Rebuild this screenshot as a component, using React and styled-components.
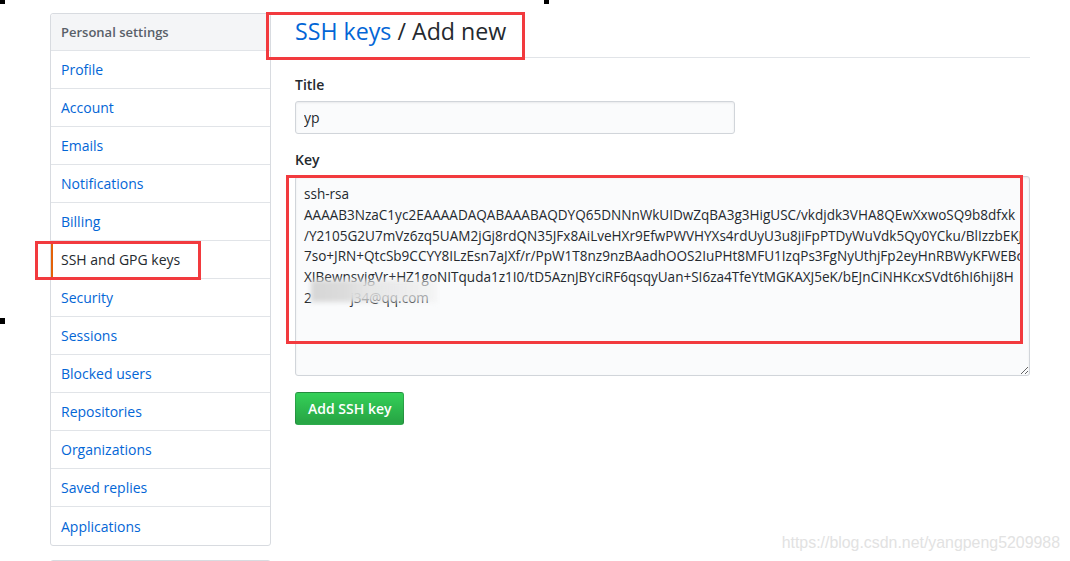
import React from "react";
import styled, { createGlobalStyle } from "styled-components";

const Global = createGlobalStyle`
  html, body { margin: 0; padding: 0; background: #fff; overflow: hidden; }
  body { font-family: "Open Sans", "Noto Sans", Arial, sans-serif; color: #24292e; }
  * { box-sizing: border-box; }
`;

const Page = styled.div`
  position: relative;
  width: 1070px;
  height: 561px;
  overflow: hidden;
  display: flex;
  align-items: flex-start;
  padding: 13px 0 0 50px;
  gap: 24px;
`;

const SideColumn = styled.div`
  display: flex;
  flex-direction: column;
  gap: 14px;
  width: 221px;
  flex: none;
`;

const Menu = styled.nav`
  border: 1px solid #d8dbe0;
  border-radius: 3px;
  background: #fff;
  display: flex;
  flex-direction: column;
  min-height: ${(p) => p.$minH || "0"};
`;

const MenuHeader = styled.div`
  height: 37px;
  display: flex;
  align-items: center;
  padding: 0 10px;
  background: #f4f5f7;
  border-bottom: 1px solid #e1e4e8;
  font-size: 13px;
  font-weight: 600;
  color: #586069;
  border-radius: 3px 3px 0 0;
`;

const MenuItem = styled.a`
  height: 38px;
  display: flex;
  align-items: center;
  padding: 0 10px 0 ${(p) => (p.$active ? "8px" : "10px")};
  border-bottom: ${(p) => (p.$last ? "none" : "1px solid #e1e4e8")};
  border-left: ${(p) => (p.$active ? "2px solid #e36209" : "none")};
  font-size: 14px;
  color: ${(p) => (p.$active ? "#24292e" : "#0366d6")};
  text-decoration: none;
`;

const Main = styled.main`
  width: 735px;
  flex: none;
  display: flex;
  flex-direction: column;
`;

const Subhead = styled.div`
  padding-bottom: 8px;
  border-bottom: 1px solid #e1e4e8;
  margin-bottom: 16px;
`;

const Heading = styled.h2`
  margin: 0;
  font-size: 23.2px;
  line-height: 36px;
  font-weight: 400;
  color: #24292e;
`;

const HeadLink = styled.a`
  color: #0366d6;
  text-decoration: none;
`;

const Label = styled.label`
  display: block;
  font-size: 14px;
  line-height: 21px;
  font-weight: 600;
  margin-bottom: 6px;
  color: #24292e;
`;

const Group = styled.div`
  margin-bottom: ${(p) => p.$mb || "15px"};
`;

const Input = styled.input`
  display: block;
  width: 440px;
  height: 33px;
  padding: 6px 8px;
  font-family: inherit;
  font-size: 14px;
  color: #24292e;
  background: #fafbfc;
  border: 1px solid #d1d5da;
  border-radius: 3px;
  box-shadow: inset 0 1px 2px rgba(27, 31, 35, 0.075);
  outline: none;
`;

const AreaWrap = styled.div`
  position: relative;
  width: 735px;
`;

const TextArea = styled.textarea`
  display: block;
  width: 735px;
  height: 200px;
  padding: 7px 8px;
  font-family: inherit;
  font-size: 13.55px;
  line-height: 20.8px;
  color: #24292e;
  background: #fafbfc;
  border: 1px solid #d1d5da;
  border-radius: 3px;
  box-shadow: inset 0 1px 2px rgba(27, 31, 35, 0.075);
  white-space: pre;
  overflow: hidden;
  resize: vertical;
  outline: none;
`;

const Smudge = styled.div`
  position: absolute;
  left: 16px;
  top: 104px;
  width: 126px;
  height: 22px;
  background: linear-gradient(
    90deg,
    rgba(214, 214, 214, 1) 0%,
    rgba(220, 220, 220, 1) 28%,
    rgba(226, 226, 226, 0.85) 45%,
    rgba(232, 232, 232, 0.75) 75%,
    rgba(240, 240, 240, 0.6) 100%
  );
  filter: blur(2.5px);
`;

const Button = styled.button`
  align-self: flex-start;
  margin-top: 16px;
  height: 33px;
  padding: 0 12px;
  font-family: inherit;
  font-size: 14px;
  font-weight: 600;
  color: #fff;
  background: linear-gradient(-180deg, #34d058 0%, #28a745 90%);
  border: 1px solid rgba(27, 31, 35, 0.2);
  border-radius: 3px;
  cursor: pointer;
`;

const Mark = styled.div`
  position: absolute;
  left: ${(p) => p.$x}px;
  top: ${(p) => p.$y}px;
  width: ${(p) => p.$w}px;
  height: ${(p) => p.$h}px;
  border: 3px solid #f23a3e;
  pointer-events: none;
`;

const Dot = styled.div`
  position: absolute;
  left: ${(p) => p.$x}px;
  top: ${(p) => p.$y}px;
  width: ${(p) => p.$w}px;
  height: ${(p) => p.$h}px;
  background: #000;
`;

const Watermark = styled.div`
  position: absolute;
  right: 10px;
  bottom: 9px;
  font-family: "Liberation Sans", Arial, sans-serif;
  font-size: 15.9px;
  color: #e2e2e2;
`;

const items = [
  "Profile",
  "Account",
  "Emails",
  "Notifications",
  "Billing",
  "SSH and GPG keys",
  "Security",
  "Sessions",
  "Blocked users",
  "Repositories",
  "Organizations",
  "Saved replies",
  "Applications",
];

const keyText = [
  "ssh-rsa",
  "AAAAB3NzaC1yc2EAAAADAQABAAABAQDYQ65DNNnWkUIDwZqBA3g3HigUSC/vkdjdk3VHA8QEwXxwoSQ9b8dfxk",
  "/Y2105G2U7mVz6zq5UAM2jGj8rdQN35JFx8AiLveHXr9EfwPWVHYXs4rdUyU3u8jiFpPTDyWuVdk5Qy0YCku/BlIzzbEKJ",
  "7so+JRN+QtcSb9CCYY8ILzEsn7aJXf/r/PpW1T8nz9nzBAadhOOS2IuPHt8MFU1IzqPs3FgNyUthjFp2eyHnRBWyKFWEBc",
  "XIBewnsvjgVr+HZ1goNITquda1z1I0/tD5AznJBYciRF6qsqyUan+SI6za4TfeYtMGKAXJ5eK/bEJnCiNHKcxSVdt6hI6hij8H",
  "2           j34@qq.com",
].join("\n");

export default function App() {
  return (
    <Page>
      <Global />
      <SideColumn>
        <Menu>
          <MenuHeader>Personal settings</MenuHeader>
          {items.map((it, i) => (
            <MenuItem
              key={it}
              href="#"
              $active={it === "SSH and GPG keys"}
              $last={i === items.length - 1}
            >
              {it}
            </MenuItem>
          ))}
        </Menu>
        <Menu $minH="40px" aria-hidden="true" />
      </SideColumn>
      <Main>
        <Subhead>
          <Heading>
            <HeadLink href="#">SSH keys</HeadLink> / Add new
          </Heading>
        </Subhead>
        <Group>
          <Label>Title</Label>
          <Input defaultValue="yp" />
        </Group>
        <Group $mb="0">
          <Label>Key</Label>
          <AreaWrap>
            <TextArea defaultValue={keyText} wrap="off" spellCheck={false} />
            <Smudge />
          </AreaWrap>
        </Group>
        <Button>Add SSH key</Button>
      </Main>
      <Mark $x={266} $y={12} $w={259} $h={48} />
      <Mark $x={35} $y={241} $w={166} $h={39} />
      <Mark $x={286} $y={175} $w={737} $h={169} />
      <Dot $x={0} $y={0} $w={5} $h={4} />
      <Dot $x={544} $y={0} $w={5} $h={4} />
      <Dot $x={0} $y={318} $w={5} $h={6} />
      <Watermark>https://blog.csdn.net/yangpeng5209988</Watermark>
    </Page>
  );
}
